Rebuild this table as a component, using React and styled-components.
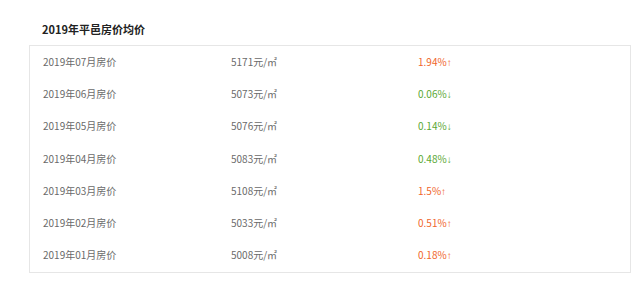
import styled, { createGlobalStyle } from "styled-components";

const GlobalStyle = createGlobalStyle`
  body {
    margin: 0;
    background: #fff;
    font-family: "Noto Sans CJK SC", "Noto Sans", sans-serif;
  }
`;

const Container = styled.div`
  width: 640px;
  height: 304px;
  padding: 0 9px 0 29px;
  box-sizing: border-box;
`;

const Title = styled.h2`
  margin: 0;
  padding: 20px 0 0 13px;
  height: 25px;
  font-size: 11px;
  line-height: 18px;
  font-weight: 700;
  color: #222;
  box-sizing: content-box;
`;

const Table = styled.div`
  border: 1px solid #e6e6e6;
  width: 602px;
  box-sizing: border-box;
`;

const Row = styled.div`
  display: grid;
  grid-template-columns: 188px 187px 1fr;
  align-items: center;
  height: 32.3px;
  padding: 0 0 2px 13px;
  box-sizing: border-box;
  font-size: 10px;
  color: #6a6a6a;
`;

const Cell = styled.span``;

const Change = styled.span`
  color: ${(p) => (p.up ? "#f0652a" : "#5aa733")};
`;

const Arrow = styled.span`
  font-family: "Liberation Sans", sans-serif;
  font-size: 10px;
`;

const data = [
  { month: "07", price: 5171, change: "1.94%", up: true },
  { month: "06", price: 5073, change: "0.06%", up: false },
  { month: "05", price: 5076, change: "0.14%", up: false },
  { month: "04", price: 5083, change: "0.48%", up: false },
  { month: "03", price: 5108, change: "1.5%", up: true },
  { month: "02", price: 5033, change: "0.51%", up: true },
  { month: "01", price: 5008, change: "0.18%", up: true },
];

const App = () => {
  return (
    <Container>
      <GlobalStyle />
      <Title>2019年平邑房价均价</Title>
      <Table>
        {data.map((item) => (
          <Row key={item.month}>
            <Cell>2019年{item.month}月房价</Cell>
            <Cell>{item.price}元/㎡</Cell>
            <Change up={item.up}>
              {item.change}
              <Arrow>{item.up ? "↑" : "↓"}</Arrow>
            </Change>
          </Row>
        ))}
      </Table>
    </Container>
  );
};

export default App;
